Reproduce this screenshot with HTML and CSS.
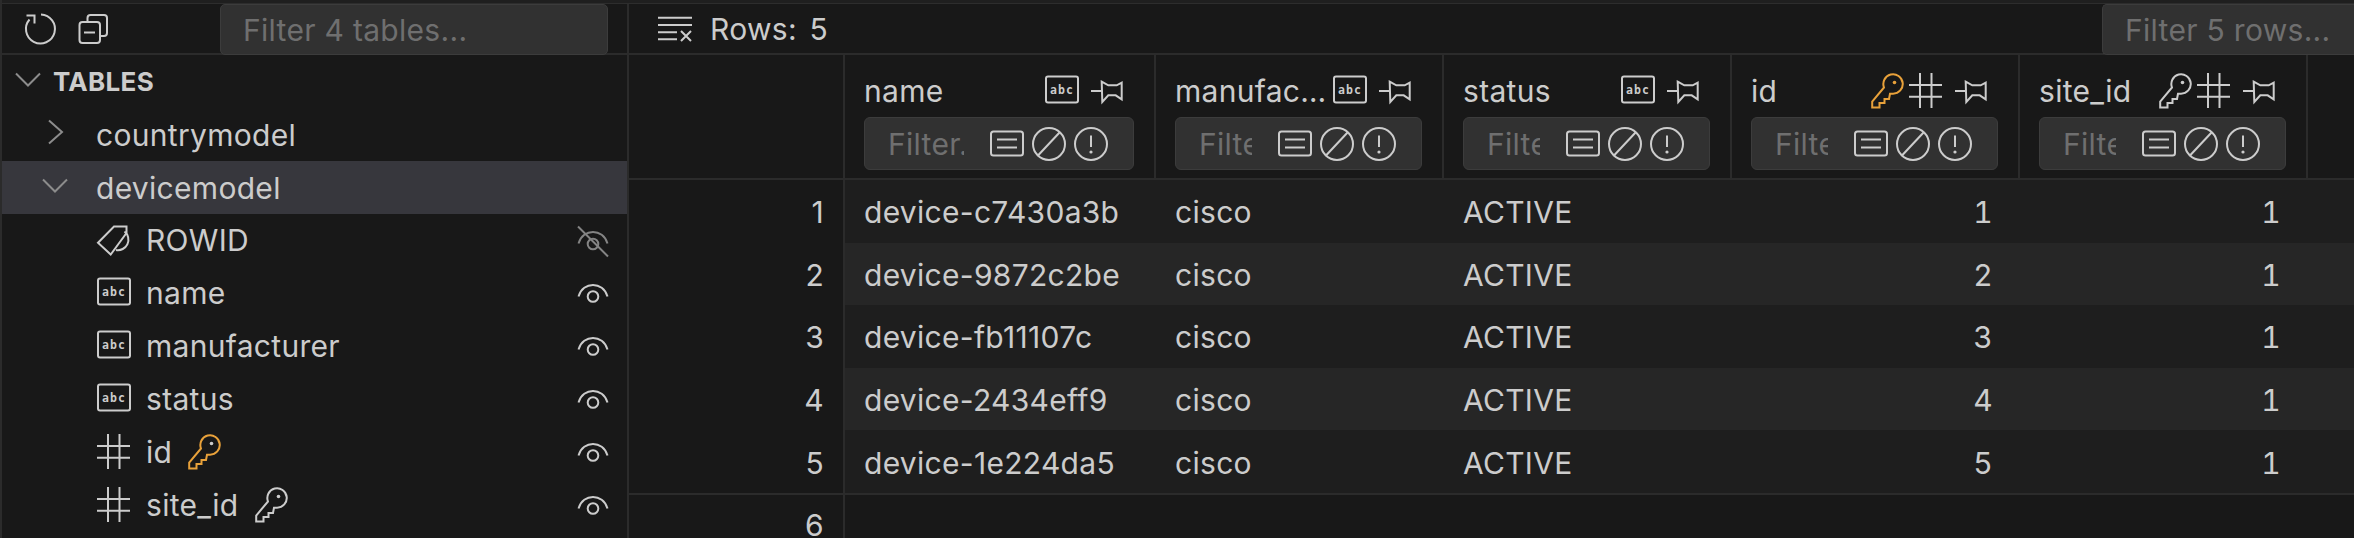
FILE: index.html
```html
<!DOCTYPE html>
<html lang="en">
<head>
<meta charset="utf-8">
<title>Tables</title>
<link rel="stylesheet" href="styles.css">
</head>
<body>
<svg class="sprite" xmlns="http://www.w3.org/2000/svg">
  <symbol id="i-refresh" viewBox="0 0 36 36"><path d="M19 3.500A14.500 14.500 0 1 1 7.500 8.500"/><path d="M4.500 4.500H12.500V12.500"/></symbol>
  <symbol id="i-collapse" viewBox="0 0 36 36"><path d="M11.500 10V7a3 3 0 0 1 3-3H28a3 3 0 0 1 3 3v15a3 3 0 0 1-3 3h-3.500"/><rect x="3.500" y="11" width="20.500" height="21" rx="3"/><path d="M8 21.500H19"/></symbol>
  <symbol id="i-down" viewBox="0 0 36 36"><path d="M6 9.500L18 21.500L30 9.500"/></symbol>
  <symbol id="i-right" viewBox="0 0 36 36"><path d="M12 3.500L25 15L12 26.500"/></symbol>
  <symbol id="i-tag" viewBox="0 0 36 36"><path d="M2 20.700L18 4.500H30.500V11L14.700 32.500Z"/><path d="M28.500 9.500A10.500 10.500 0 0 1 20 28"/></symbol>
  <symbol id="i-abc" viewBox="0 0 36 36"><rect x="2" y="3.500" width="32" height="26" rx="2"/><text class="abc-glyph" x="18" y="21" text-anchor="middle">abc</text></symbol>
  <symbol id="i-hash" viewBox="0 0 36 36"><path d="M12 0V35M23.500 0V35M1 12H34M1 23.700H34"/></symbol>
  <symbol id="i-key" viewBox="0 0 36 36"><path d="M15 14.500A9.700 9.700 0 1 1 24 20.700H21L20 26H15.500V30H10.500V34.500H3.200V28.500Z"/><circle class="solid" cx="25.500" cy="9.500" r="1.800"/></symbol>
  <symbol id="i-pin" viewBox="0 0 36 36"><path d="M1 18H11.700"/><path d="M11.700 8.700L18.300 12.300H26.700L31.700 9.700V26.300L25.700 22.300H18.300L12.300 29Z"/></symbol>
  <symbol id="i-eye" viewBox="0 0 36 36"><path d="M3.500 21.500C8 6 28 6 32.500 21.500"/><circle cx="18" cy="21.500" r="5.300"/></symbol>
  <symbol id="i-eye-off" viewBox="0 0 36 36"><path d="M3.500 21.500C8 6 28 6 32.500 21.500"/><circle cx="18" cy="22" r="5.300"/><path d="M3 4.500L33 34.500"/></symbol>
  <symbol id="i-clear" viewBox="0 0 36 36"><path d="M1 6.700H35M1 14H35M1 21.300H20M1 28.300H20"/><path d="M24 20L34 30M34 20L24 30"/></symbol>
  <symbol id="i-list" viewBox="0 0 36 36"><rect x="2" y="5.500" width="32" height="24" rx="2.500"/><path d="M8 13.500H28M8 21.500H28"/></symbol>
  <symbol id="i-ban" viewBox="0 0 36 36"><circle cx="18" cy="18" r="16"/><path d="M6.500 30L29 6"/></symbol>
  <symbol id="i-info" viewBox="0 0 36 36"><circle cx="18" cy="18" r="16"/><path d="M18 9.500V21"/><circle class="solid" cx="18" cy="26" r="1.600"/></symbol>
</svg>

<div class="app">
  <div class="topline"></div>
  <div class="panes">
    <aside class="sidebar">
      <div class="toolbar side-toolbar">
        <svg class="icon"><use href="#i-refresh"/></svg>
        <svg class="icon"><use href="#i-collapse"/></svg>
        <input class="search side-search" placeholder="Filter 4 tables...">
      </div>
      <div class="tree">
        <div class="row section"><svg class="icon chev"><use href="#i-down"/></svg><span class="section-title">TABLES</span></div>
        <div class="row table-row"><svg class="icon chev"><use href="#i-right"/></svg><span>countrymodel</span></div>
        <div class="row table-row selected"><svg class="icon chev"><use href="#i-down"/></svg><span>devicemodel</span></div>
        <div class="row col-row"><svg class="icon"><use href="#i-tag"/></svg><span>ROWID</span><svg class="icon eye dim"><use href="#i-eye-off"/></svg></div>
        <div class="row col-row"><svg class="icon"><use href="#i-abc"/></svg><span>name</span><svg class="icon eye"><use href="#i-eye"/></svg></div>
        <div class="row col-row"><svg class="icon"><use href="#i-abc"/></svg><span>manufacturer</span><svg class="icon eye"><use href="#i-eye"/></svg></div>
        <div class="row col-row"><svg class="icon"><use href="#i-abc"/></svg><span>status</span><svg class="icon eye"><use href="#i-eye"/></svg></div>
        <div class="row col-row"><svg class="icon"><use href="#i-hash"/></svg><span>id</span><svg class="icon key primary"><use href="#i-key"/></svg><svg class="icon eye"><use href="#i-eye"/></svg></div>
        <div class="row col-row"><svg class="icon"><use href="#i-hash"/></svg><span>site_id</span><svg class="icon key"><use href="#i-key"/></svg><svg class="icon eye"><use href="#i-eye"/></svg></div>
      </div>
    </aside>

    <main class="main">
      <div class="toolbar main-toolbar">
        <svg class="icon clear"><use href="#i-clear"/></svg>
        <span class="rows-count">Rows: 5</span>
        <input class="search main-search" placeholder="Filter 5 rows...">
      </div>

      <div class="grid head">
        <div class="gutter"></div>
        <div class="hcell">
          <div class="hline"><span class="hname">name</span><svg class="icon"><use href="#i-abc"/></svg><svg class="icon pin"><use href="#i-pin"/></svg></div>
          <div class="cfilter"><input placeholder="Filter..."><svg class="icon"><use href="#i-list"/></svg><svg class="icon"><use href="#i-ban"/></svg><svg class="icon"><use href="#i-info"/></svg></div>
        </div>
        <div class="hcell">
          <div class="hline"><span class="hname">manufacturer</span><svg class="icon"><use href="#i-abc"/></svg><svg class="icon pin"><use href="#i-pin"/></svg></div>
          <div class="cfilter"><input placeholder="Filter..."><svg class="icon"><use href="#i-list"/></svg><svg class="icon"><use href="#i-ban"/></svg><svg class="icon"><use href="#i-info"/></svg></div>
        </div>
        <div class="hcell">
          <div class="hline"><span class="hname">status</span><svg class="icon"><use href="#i-abc"/></svg><svg class="icon pin"><use href="#i-pin"/></svg></div>
          <div class="cfilter"><input placeholder="Filter..."><svg class="icon"><use href="#i-list"/></svg><svg class="icon"><use href="#i-ban"/></svg><svg class="icon"><use href="#i-info"/></svg></div>
        </div>
        <div class="hcell">
          <div class="hline"><span class="hname">id</span><svg class="icon primary"><use href="#i-key"/></svg><svg class="icon hash"><use href="#i-hash"/></svg><svg class="icon pin"><use href="#i-pin"/></svg></div>
          <div class="cfilter"><input placeholder="Filter..."><svg class="icon"><use href="#i-list"/></svg><svg class="icon"><use href="#i-ban"/></svg><svg class="icon"><use href="#i-info"/></svg></div>
        </div>
        <div class="hcell">
          <div class="hline"><span class="hname">site_id</span><svg class="icon"><use href="#i-key"/></svg><svg class="icon hash"><use href="#i-hash"/></svg><svg class="icon pin"><use href="#i-pin"/></svg></div>
          <div class="cfilter"><input placeholder="Filter..."><svg class="icon"><use href="#i-list"/></svg><svg class="icon"><use href="#i-ban"/></svg><svg class="icon"><use href="#i-info"/></svg></div>
        </div>
        <div></div>
      </div>

      <div class="grid drow"><div class="gutter">1</div><div class="cell">device-c7430a3b</div><div class="cell">cisco</div><div class="cell">ACTIVE</div><div class="cell num">1</div><div class="cell num">1</div><div></div></div>
      <div class="grid drow even"><div class="gutter">2</div><div class="cell">device-9872c2be</div><div class="cell">cisco</div><div class="cell">ACTIVE</div><div class="cell num">2</div><div class="cell num">1</div><div></div></div>
      <div class="grid drow"><div class="gutter">3</div><div class="cell">device-fb11107c</div><div class="cell">cisco</div><div class="cell">ACTIVE</div><div class="cell num">3</div><div class="cell num">1</div><div></div></div>
      <div class="grid drow even"><div class="gutter">4</div><div class="cell">device-2434eff9</div><div class="cell">cisco</div><div class="cell">ACTIVE</div><div class="cell num">4</div><div class="cell num">1</div><div></div></div>
      <div class="grid drow last"><div class="gutter">5</div><div class="cell">device-1e224da5</div><div class="cell">cisco</div><div class="cell">ACTIVE</div><div class="cell num">5</div><div class="cell num">1</div><div></div></div>
      <div class="grid drow blank"><div class="gutter">6</div></div>
    </main>
  </div>
</div>
</body>
</html>
```

FILE: styles.css
```css
* { box-sizing: border-box; }

html, body {
  margin: 0;
  height: 100%;
  overflow: hidden;
  background: #181818;
}

body {
  font-family: Inter, "Liberation Sans", sans-serif;
  font-size: 30px;
  letter-spacing: 0.3px;
  color: #cccccc;
}

.sprite { display: none; }

.icon {
  flex: 0 0 36px;
  width: 36px;
  height: 36px;
  fill: none;
  stroke: #cccccc;
  stroke-width: 2;
  overflow: visible;
}

.solid { fill: currentColor; stroke: none; }

.abc-glyph {
  font-family: "DejaVu Sans Mono", monospace;
  font-size: 11.5px;
  font-weight: 700;
  letter-spacing: 1px;
  fill: #cccccc;
  stroke: none;
}

.primary { stroke: #e8a13a; color: #e8a13a; }
.key { color: #cccccc; }
.dim { opacity: 0.6; }

.app {
  height: 538px;
  display: flex;
  flex-direction: column;
  border-left: 2px solid #2b2b2b;
  overflow: hidden;
}

.topline {
  flex: 0 0 4px;
  background: #1f1f1f;
  border-bottom: 1px solid #2d2d2d;
}

.panes {
  flex: 1;
  display: flex;
  min-height: 0;
}

.sidebar {
  flex: 0 0 627px;
  border-right: 2px solid #2b2b2b;
  overflow: hidden;
}

.toolbar {
  height: 51px;
  display: flex;
  align-items: center;
  border-bottom: 2px solid #2b2b2b;
}

.search {
  height: 51px;
  align-self: flex-start;
  background: #313131;
  border: 1px solid #3c3c3c;
  border-radius: 5px;
  color: #cccccc;
  font: inherit;
  letter-spacing: inherit;
  outline: none;
  padding: 0 0 0 22px;
}

.search::placeholder,
.cfilter input::placeholder {
  color: #6f6f6f;
  opacity: 1;
}

.side-toolbar { padding: 0 19px 0 20px; gap: 18px; }
.side-search { margin-left: auto; width: 388px; }

.tree { display: flex; flex-direction: column; }

.row {
  flex: 0 0 53px;
  height: 53px;
  display: flex;
  align-items: center;
}

.chev { stroke: #8c8c8c; }

.section { padding-left: 8px; gap: 7px; }
.section-title { font-size: 26px; font-weight: 700; color: #cccccc; }

.table-row { padding-left: 35px; gap: 23px; }
.selected { background: #37373d; }

.col-row { padding: 0 16px 1px 94px; gap: 14px; }
.eye { margin-left: auto; }

.main {
  flex: 1;
  min-width: 0;
  overflow: hidden;
}

.main-toolbar { padding-left: 28px; gap: 17px; }
.rows-count { word-spacing: 4px; }
.main-search {
  margin-left: auto;
  flex: 0 0 252px;
  width: 252px;
  border-right: 0;
  border-radius: 5px 0 0 5px;
}

.grid {
  display: grid;
  grid-template-columns: 216px 311px 288px 288px 288px 288px 1fr;
}

.head { height: 125px; border-bottom: 2px solid #2b2b2b; }

.gutter {
  background: #181818;
  border-right: 2px solid #2b2b2b;
  padding: 2px 19px 0 0;
  display: flex;
  align-items: center;
  justify-content: flex-end;
}

.hcell {
  border-right: 2px solid #2b2b2b;
  padding: 18px 20px 0 19px;
  min-width: 0;
}

.hline {
  height: 36px;
  display: flex;
  align-items: center;
  margin-bottom: 8px;
  padding-right: 8px;
}

.hname {
  flex: 1;
  min-width: 0;
  overflow: hidden;
  white-space: nowrap;
  text-overflow: ellipsis;
}

.pin { margin-left: 10px; }
.hash { margin-left: 3px; }

.cfilter {
  height: 53px;
  display: flex;
  align-items: center;
  gap: 6px;
  background: #313131;
  border: 1px solid #3c3c3c;
  border-radius: 6px;
  padding: 0 24px 0 23px;
}

.cfilter input {
  flex: 1;
  min-width: 0;
  margin-right: 19px;
  background: transparent;
  border: 0;
  outline: none;
  padding: 0;
  font: inherit;
  letter-spacing: inherit;
  color: #cccccc;
}

.drow { height: 62.6px; background: #1e1e1e; }
.drow.even { background: #262626; }
.drow.last { height: 64.6px; border-bottom: 2px solid #2b2b2b; }
.drow.blank { background: #181818; height: 43px; }
.blank .gutter { height: 43px; padding-top: 0; align-items: flex-start; line-height: 60px; }

.cell {
  display: flex;
  align-items: center;
  padding: 2px 20px 0 19px;
  min-width: 0;
  white-space: nowrap;
}

.num {
  justify-content: flex-end;
  padding-right: 27px;
  font-variant-numeric: tabular-nums;
}
```
